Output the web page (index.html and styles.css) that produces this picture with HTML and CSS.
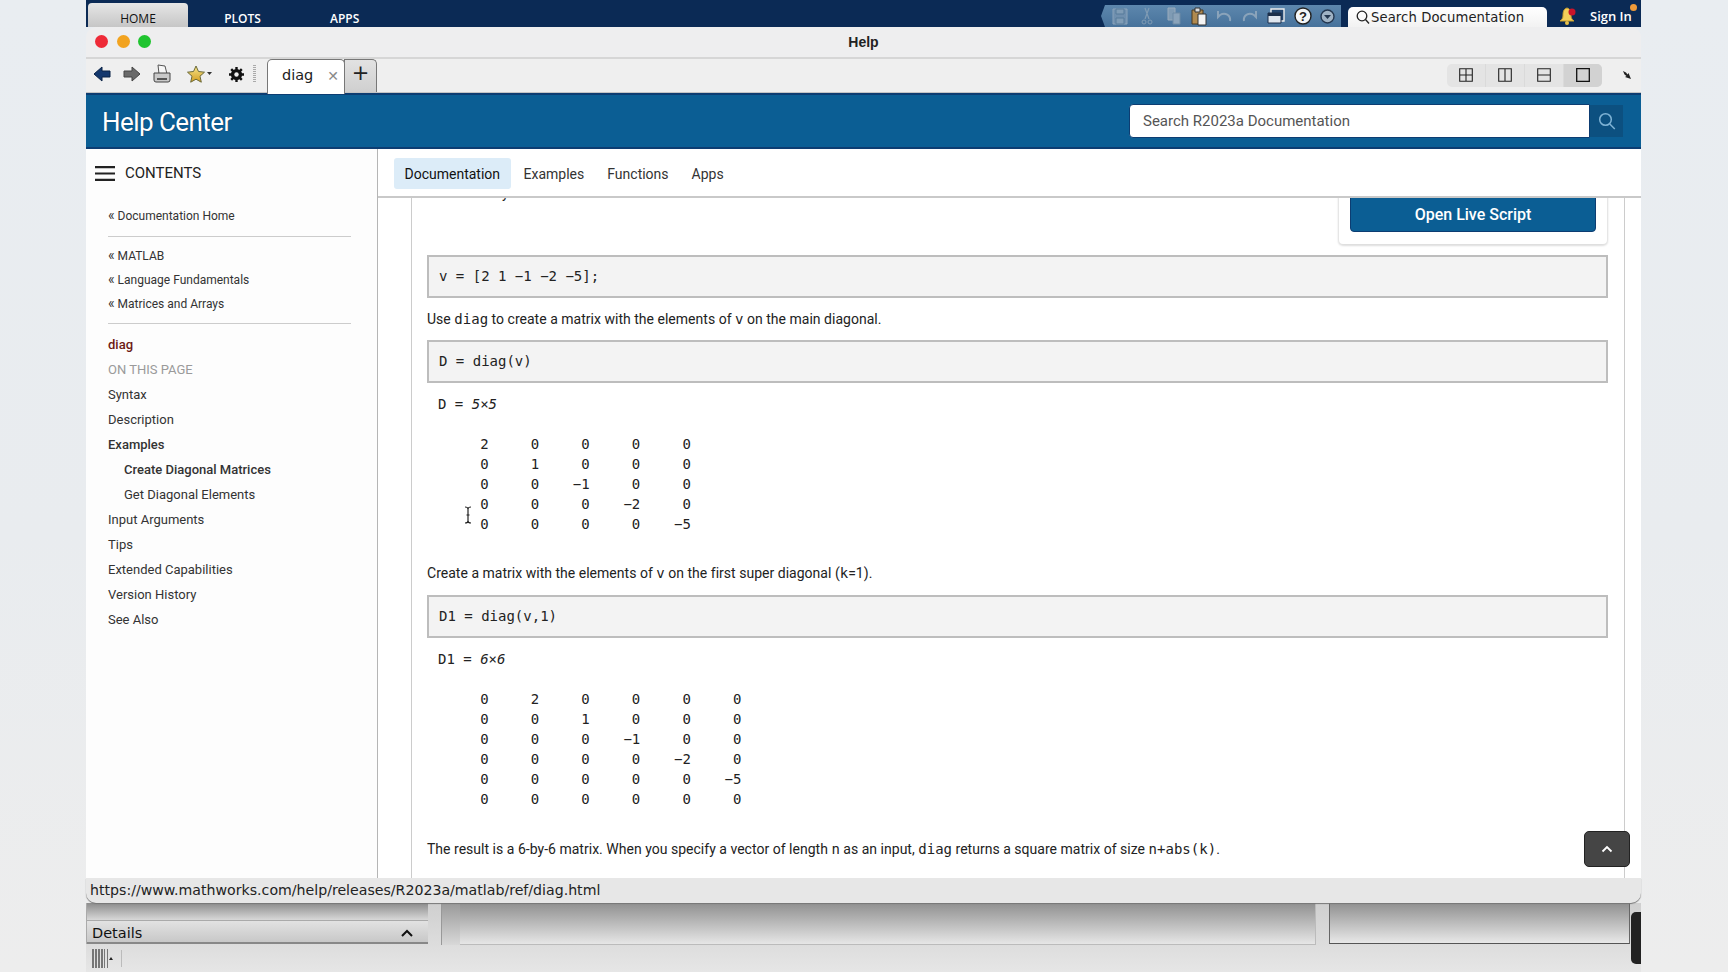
FILE: index.html
```html
<!DOCTYPE html>
<html lang="en">
<head>
<meta charset="utf-8">
<title>Help</title>
<link rel="stylesheet" href="styles.css">
</head>
<body>
<div class="screen">
  <div class="matlab-top">
    <div class="rib-tab rib-active">HOME</div>
    <div class="rib-tab rib-plots">PLOTS</div>
    <div class="rib-tab rib-apps">APPS</div>
    <div class="quick">
      <svg class="qi" width="18" height="20" viewBox="0 0 18 20"><path d="M2 3h14v15H2z" fill="#6f8fae" stroke="#8aa3ba"/><path d="M5 3h8v5H5zM5 12h8v6H5z" fill="#7f9cb6" stroke="#577a9a"/></svg>
      <svg class="qi qi-cut" width="14" height="20" viewBox="0 0 14 20"><path d="M9 2L5 13M5 2l4 11" stroke="#7f9bb4" stroke-width="1.2" fill="none"/><circle cx="4" cy="16" r="2" fill="none" stroke="#7f9bb4"/><circle cx="10" cy="16" r="2" fill="none" stroke="#7f9bb4"/></svg>
      <svg class="qi qi-copy" width="16" height="20" viewBox="0 0 16 20"><path d="M2 2h7v12H2z" fill="#7f9bb4" stroke="#9ab"/><path d="M7 7h7v11H7z" fill="#8aa3ba" stroke="#6d8aa5"/></svg>
      <svg class="qi qi-paste" width="17" height="20" viewBox="0 0 17 20"><path d="M1 4h11v14H1z" fill="#b08a50" stroke="#4a3a20"/><path d="M4 2h5v4H4z" fill="#ddd" stroke="#333"/><path d="M7 8h8v11H7z" fill="#f4f4f4" stroke="#333"/></svg>
      <svg class="qi qi-undo" width="18" height="20" viewBox="0 0 18 20"><path d="M15 15c1-6-5-9-10-6L3 11V5" fill="none" stroke="#8aa3ba" stroke-width="2"/></svg>
      <svg class="qi qi-redo" width="18" height="20" viewBox="0 0 18 20"><path d="M3 15C2 9 8 6 13 9l2 2V5" fill="none" stroke="#8aa3ba" stroke-width="2"/></svg>
      <svg class="qi qi-win" width="18" height="20" viewBox="0 0 18 20"><path d="M4 3h13v12H4z" fill="#23466f" stroke="#eee" stroke-width="1.4"/><path d="M1 7h13v10H1z" fill="#dfe6ee" stroke="#1c2f4a"/><path d="M1 7h13v3H1z" fill="#1c2f4a"/></svg>
      <svg class="qi qi-help" width="18" height="18" viewBox="0 0 18 18"><circle cx="9" cy="9" r="8" fill="#f4f6f8" stroke="#222" stroke-width="1.4"/><text x="9" y="13.5" class="qmark">?</text></svg>
      <svg class="qi qi-more" width="15" height="15" viewBox="0 0 15 15"><circle cx="7.5" cy="7.5" r="6.5" fill="#9fb2c4" stroke="#23364f" stroke-width="1.4"/><path d="M4 6h7l-3.500 4z" fill="#23364f"/></svg>
    </div>
    <div class="doc-search">
      <svg width="14" height="15" viewBox="0 0 14 15"><circle cx="6" cy="6" r="4.800" fill="none" stroke="#222" stroke-width="1.300"/><path d="M9.500 9.500l3.500 4" stroke="#222" stroke-width="1.300"/></svg>
      <span>Search Documentation</span>
    </div>
    <svg class="bell" width="18" height="20" viewBox="0 0 18 20"><path d="M8 2c-4 1-4 5-4 8s-2 4-3 5h14c-1-1-3-2-3-5s0-7-4-8z" fill="#f4cf5a" stroke="#c89d2b"/><circle cx="8" cy="17" r="2" fill="#e7c04a"/><circle cx="13" cy="6" r="3.500" fill="#c9142a"/></svg>
    <span class="sign-in">Sign In</span>
    <span class="notify"></span>
  </div>

  <main class="window">
    <div class="titlebar">
      <div class="lights"><span class="light l-red"></span><span class="light l-amber"></span><span class="light l-green"></span></div>
      <h1 class="win-title">Help</h1>
    </div>

    <div class="toolbar">
      <svg class="ti ti-back" width="18" height="16" viewBox="0 0 18 16"><path d="M1 8l8-7v4h8v6H9v4z" fill="#14386e" stroke="#0b2347"/></svg>
      <svg class="ti ti-fwd" width="18" height="16" viewBox="0 0 18 16"><path d="M17 8L9 1v4H1v6h8v4z" fill="#6a6a6a" stroke="#444"/></svg>
      <svg class="ti ti-print" width="18" height="20" viewBox="0 0 18 20"><path d="M5 1l7 1 2 8H6z" fill="#f6f6f6" stroke="#555"/><path d="M1 9h16v7a2 2 0 0 1-2 2H3a2 2 0 0 1-2-2z" fill="#c9c9c9" stroke="#444"/><path d="M4 14h10v2H4z" fill="#555"/></svg>
      <svg class="ti ti-star" width="25" height="18" viewBox="0 0 25 18"><defs><linearGradient id="st" x1="0" y1="0" x2="0" y2="1"><stop offset="0" stop-color="#f7e58a"/><stop offset="1" stop-color="#d29e22"/></linearGradient></defs><path d="M9 1l2.500 5.500 6 .7-4.500 4 1.300 6L9 14.200 3.700 17.200 5 11.200.5 7.200l6-.7z" fill="url(#st)" stroke="#6b6a3a"/><path d="M20 7h5l-2.500 3z" fill="#333"/></svg>
      <svg class="ti ti-gear" width="15" height="15" viewBox="0 0 15 15"><circle cx="7.500" cy="7.500" r="4.200" fill="none" stroke="#111" stroke-width="2.800"/><path d="M7.500 0v15M0 7.500h15M2.200 2.200l10.600 10.600M12.800 2.200L2.200 12.800" stroke="#111" stroke-width="2.400"/><circle cx="7.500" cy="7.500" r="2.200" fill="#eee"/></svg>
      <span class="grip"></span>
      <div class="tab-diag"><span class="tab-name">diag</span><span class="tab-x">✕</span></div>
      <div class="tab-plus">+</div>
      <div class="views">
        <span class="view"><svg width="14" height="14" viewBox="0 0 14 14"><path d="M.7.7h12.600v12.600H.7zM7 .7v12.600M.7 7h12.600" fill="none" stroke="#222" stroke-width="1.100"/></svg></span>
        <span class="view"><svg width="14" height="14" viewBox="0 0 14 14"><path d="M.7.7h12.600v12.600H.7zM7 .7v12.600" fill="none" stroke="#222" stroke-width="1.100"/></svg></span>
        <span class="view"><svg width="14" height="14" viewBox="0 0 14 14"><path d="M.7.7h12.600v12.600H.7zM.7 7h12.600" fill="none" stroke="#222" stroke-width="1.100"/></svg></span>
        <span class="view view-on"><svg width="14" height="14" viewBox="0 0 14 14"><path d="M.7.7h12.600v12.600H.7z" fill="none" stroke="#111" stroke-width="1.300"/></svg></span>
      </div>
      <svg class="undock" width="8" height="8" viewBox="0 0 8 8"><path d="M0 0l3 1.500 1.500 2 1-1.500L8 8 2 6l1.500-1L1.500 3.500z" fill="#222"/></svg>
    </div>

    <header class="help-head">
      <div class="help-title">Help Center</div>
      <div class="help-search">
        <div class="help-input">Search R2023a Documentation</div>
        <div class="help-btn"><svg width="18" height="18" viewBox="0 0 18 18"><circle cx="7.500" cy="7.500" r="5.800" fill="none" stroke="#7fb3d5" stroke-width="1.500"/><path d="M11.800 12l5 5" stroke="#7fb3d5" stroke-width="1.500"/></svg></div>
      </div>
    </header>

    <div class="body-row">
      <nav class="sidebar">
        <div class="contents-head">
          <svg width="20" height="15" viewBox="0 0 20 15"><path d="M0 1.200h20M0 7.500h20M0 13.800h20" stroke="#222" stroke-width="2.200"/></svg>
          <span>CONTENTS</span>
        </div>
        <a class="nav-link nav-home"><span class="nav-q">«</span> Documentation Home</a>
        <div class="nav-rule"></div>
        <a class="nav-link nav-small"><span class="nav-q">«</span> MATLAB</a>
        <a class="nav-link nav-small"><span class="nav-q">«</span> Language Fundamentals</a>
        <a class="nav-link nav-small"><span class="nav-q">«</span> Matrices and Arrays</a>
        <div class="nav-rule nav-rule-2"></div>
        <a class="nav-link nav-current">diag</a>
        <div class="nav-link nav-label">ON THIS PAGE</div>
        <a class="nav-link">Syntax</a>
        <a class="nav-link">Description</a>
        <a class="nav-link nav-strong">Examples</a>
        <a class="nav-link nav-sub nav-strong">Create Diagonal Matrices</a>
        <a class="nav-link nav-sub">Get Diagonal Elements</a>
        <a class="nav-link">Input Arguments</a>
        <a class="nav-link">Tips</a>
        <a class="nav-link">Extended Capabilities</a>
        <a class="nav-link">Version History</a>
        <a class="nav-link">See Also</a>
      </nav>

      <section class="doc">
        <div class="doc-tabs">
          <span class="doc-tab doc-tab-on">Documentation</span>
          <span class="doc-tab">Examples</span>
          <span class="doc-tab">Functions</span>
          <span class="doc-tab">Apps</span>
        </div>
        <div class="doc-scroll">
          <article class="article">
            <div class="live-card"><div class="live-btn">Open Live Script</div></div>
            <p class="para para-first">Create a 1-by-5 vector.</p>
            <div class="code">v = [2 1 −1 −2 −5];</div>
            <p class="para para-gap">Use <code>diag</code> to create a matrix with the elements of <code>v</code> on the main diagonal.</p>
            <div class="code">D = diag(v)</div>
<pre class="out out-a">D = <i>5×5</i>

     2     0     0     0     0
     0     1     0     0     0
     0     0    −1     0     0
     0     0     0    −2     0
     0     0     0     0    −5</pre>
            <p class="para para-after">Create a matrix with the elements of <code>v</code> on the first super diagonal (<code>k</code>=1).</p>
            <div class="code">D1 = diag(v,1)</div>
<pre class="out out-b">D1 = <i>6×6</i>

     0     2     0     0     0     0
     0     0     1     0     0     0
     0     0     0    −1     0     0
     0     0     0     0    −2     0
     0     0     0     0     0    −5
     0     0     0     0     0     0</pre>
            <p class="para para-after">The result is a 6-by-6 matrix. When you specify a vector of length <code>n</code> as an input, <code>diag</code> returns a square matrix of size <code>n+abs(k)</code>.</p>
          </article>
          <div class="to-top"><svg width="12" height="8" viewBox="0 0 12 8"><path d="M1.500 6.500L6 2l4.500 4.500" fill="none" stroke="#fff" stroke-width="1.800"/></svg></div>
          <svg class="ibeam" width="8" height="18" viewBox="0 0 8 18"><path d="M1 1c2 0 3 1 3 2v12c0 1-1 2-3 2M7 1c-2 0-3 1-3 2v12c0 1 1 2 3 2M2.500 9h3" fill="none" stroke="#222" stroke-width="1.200"/></svg>
        </div>
      </section>
    </div>

    <div class="statusbar">https://www.mathworks.com/help/releases/R2023a/matlab/ref/diag.html</div>
  </main>

  <div class="desk">
    <div class="desk-panels">
      <div class="details">
        <div class="details-top"></div>
        <div class="details-bar"><span>Details</span><svg width="12" height="8" viewBox="0 0 12 8"><path d="M1 7l5-5 5 5" fill="none" stroke="#111" stroke-width="2"/></svg></div>
      </div>
      <div class="gutter"></div>
      <div class="mid"></div>
      <div class="right-panel"></div>
      <div class="dark-tab"></div>
    </div>
    <div class="desk-foot">
      <span class="bars"></span><span class="caret"></span><span class="foot-rule"></span>
    </div>
  </div>
</div>
</body>
</html>
```
FILE: styles.css
```css
* { box-sizing: border-box; }
html, body { margin: 0; padding: 0; height: 100%; overflow: hidden; }
body { background: linear-gradient(180deg, #e9edf1 0%, #e9ecef 55%, #ededed 100%); font-family: Roboto, "Liberation Sans", sans-serif; color: #222; }
.screen { width: 1555px; margin-left: 86px; height: 972px; display: flex; flex-direction: column; position: relative; }

/* MATLAB ribbon strip */
.matlab-top { height: 27px; flex: none; background: #0b2a55; display: flex; align-items: flex-end; font-family: "Open Sans", "DejaVu Sans", sans-serif; color: #fff; position: relative; }
.rib-tab { font-size: 12px; line-height: 31px; height: 24px; text-align: center; }
.rib-active { width: 100px; margin-left: 2px; background: linear-gradient(#e6e6e6, #c6c6c6); border-radius: 4px 4px 0 0; color: #111; }
.rib-plots { margin-left: 36px; width: 37px; font-weight: 600; }
.rib-apps { margin-left: 69px; width: 28px; font-weight: 600; }
.quick { margin-left: 743px; width: 240px; height: 22px; display: flex; align-items: center; background: linear-gradient(#5d87ad, #47729b); clip-path: polygon(0 50%, 4px 0, 100% 0, 100% 100%, 4px 100%); padding-left: 10px; }
.qi { flex: none; }
.qi-cut { margin-left: 11px; }
.qi-copy { margin-left: 12px; }
.qi-paste { margin-left: 9px; }
.qi-undo { margin-left: 7px; }
.qi-redo { margin-left: 8px; }
.qi-win { margin-left: 8px; }
.qi-help { margin-left: 9px; }
.qi-more { margin-left: 8px; }
.qmark { font: 700 13px "Liberation Sans", sans-serif; fill: #222; text-anchor: middle; }
.doc-search { margin-left: 7px; width: 199px; height: 20px; background: linear-gradient(#fff, #f2f2f2); border-radius: 5px 5px 0 0; display: flex; align-items: center; gap: 1px; padding: 1px 0 0 8px; color: #222; font: 13.200px "DejaVu Sans", sans-serif; letter-spacing: .1px; }
.bell { margin: 0 0 1px 12px; flex: none; }
.sign-in { margin: 0 0 1px 13px; font-size: 13px; line-height: 20px; font-weight: 600; white-space: nowrap; }
.notify { position: absolute; right: 4px; top: 4px; width: 7px; height: 7px; border-radius: 50%; background: #ee9a3a; }

/* Help window */
.window { flex: none; height: 876px; display: flex; flex-direction: column; position: relative; z-index: 1; }
.titlebar { height: 32px; flex: none; background: #eeeeef; border-radius: 10px 10px 0 0; border-bottom: 2px solid #d6d6d6; margin-top: 0; display: flex; align-items: center; position: relative; }
.lights { display: flex; gap: 8.500px; padding-left: 9px; position: relative; top: -1px; }
.light { width: 13px; height: 13px; border-radius: 50%; }
.l-red { background: #ee2a37; }
.l-amber { background: #f2a31f; }
.l-green { background: #1fc42f; }
.win-title { position: absolute; left: 0; right: 0; top: 5px; margin: 0; text-align: center; font: 700 14px/20px "Liberation Sans", sans-serif; color: #222; }

.toolbar { height: 34px; flex: none; background: #efefef; display: flex; align-items: center; position: relative; border-bottom: 1px solid #c4c4c4; padding-bottom: 3px; }
.ti { flex: none; }
.ti-back { margin-left: 7px; }
.ti-fwd { margin-left: 12px; }
.ti-print { margin-left: 12px; }
.ti-star { margin-left: 16px; }
.ti-gear { margin-left: 17px; }
.grip { width: 3px; height: 18px; margin-left: 9px; background: repeating-linear-gradient(#aaa 0 1px, transparent 1px 2px); flex: none; }
.tab-diag { margin-left: 11px; width: 78px; height: 35px; align-self: flex-start; background: #fff; border: 1px solid #777; border-bottom: none; border-radius: 5px 5px 0 0; display: flex; align-items: center; padding-left: 14px; position: relative; z-index: 1; }
.tab-name { font: 14.500px "DejaVu Sans", sans-serif; color: #222; margin-top: -5px; }
.tab-x { margin-left: 14px; font: 700 14px "DejaVu Sans", sans-serif; color: #8a8a8a; margin-top: -2px; }
.tab-plus { margin-left: -1px; width: 33px; height: 33px; align-self: flex-start; background: linear-gradient(#e2e2e2, #cfcfcf); border: 1px solid #777; border-bottom: none; border-radius: 0 5px 0 0; text-align: center; font: 21px/27px "DejaVu Sans", sans-serif; color: #222; }
.views { margin-left: auto; width: 155px; height: 23px; background: #e4e4e4; border-radius: 5px; display: flex; margin-right: 39px; position: relative; top: 1px; }
.view { flex: 1; display: flex; align-items: center; justify-content: center; border-right: 1px solid #dadada; }
.view:last-child { border-right: none; }
.view-on { background: #d2d2d2; border-radius: 0 5px 5px 0; }
.undock { position: absolute; right: 10px; top: 12px; }

.help-head { height: 56px; flex: none; background: #0b5e94; border-top: 2px solid #0d3d72; border-bottom: 2px solid #0d3d72; display: flex; align-items: center; justify-content: space-between; padding: 0 18px 0 16px; }
.help-title { font-size: 26px; letter-spacing: -.55px; color: #fff; text-shadow: 0 0 1px #0a2f55; padding-top: 1px; }
.help-search { display: flex; align-items: center; }
.help-input { width: 461px; height: 34px; background: #fff; border-radius: 4px 0 0 4px; border: 1px solid #0d3d72; padding-left: 13px; font-size: 15px; line-height: 32px; color: #555; }
.help-btn { width: 33px; height: 32px; background: #0c5080; display: flex; align-items: center; justify-content: center; }

.body-row { flex: 1; min-height: 0; display: flex; background: #fff; }
.sidebar { width: 292px; flex: none; background: #fdfdfd; border-right: 1px solid #b5b5b5; padding: 14px 0 0 22px; display: flex; flex-direction: column; font-size: 13px; color: #333; }
.contents-head { margin-left: -13px; display: flex; align-items: center; gap: 10px; height: 20px; font-size: 15px; color: #222; margin-bottom: 25px; }
.nav-link { display: block; height: 25px; line-height: 25px; white-space: nowrap; }
.nav-home { height: 16px; line-height: 16px; font-size: 12px; }
.nav-small { height: 24px; line-height: 24px; font-size: 12px; }
.nav-q { font-size: 14px; line-height: 1; }
.nav-rule { width: 243px; height: 1px; background: #ccc; flex: none; margin: 12px 0 7px; }
.nav-rule-2 { margin: 7px 0 8px; }
.nav-current { color: #6d1a14; font-weight: 500; }
.nav-label { color: #9a9a9a; }
.nav-strong { font-weight: 500; }
.nav-sub { padding-left: 16px; }

.doc { flex: 1; min-width: 0; display: flex; flex-direction: column; background: #fff; }
.doc-tabs { height: 49px; flex: none; border-bottom: 2px solid #c9c9c9; display: flex; align-items: flex-start; padding: 9px 0 0 16px; font-size: 14px; gap: 3px; position: relative; z-index: 2; background: #fff; }
.doc-tab { height: 31px; line-height: 32px; padding: 0 10px; color: #333; }
.doc-tab-on { background: #dcecf8; border-radius: 3px; color: #111; padding: 0 10.500px; }
.doc-scroll { flex: 1; min-height: 0; overflow: hidden; position: relative; }
.article { margin: -15px 16px 0 33px; border-left: 1px solid #ccc; border-right: 1px solid #ccc; padding: 0 16px 40px 15px; font-size: 14px; min-height: 800px; }
.live-card { float: right; width: 268px; height: 61px; margin: 0 1px 11px 0; background: #fff; border-radius: 0 0 4px 4px; box-shadow: 0 1px 2px 1px #dedede; padding: 0 11px; }
.live-btn { height: 49px; padding-top: 14px; background: #0b5e94; border-radius: 4px; border: 1px solid #0d3d72; color: #fff; text-align: center; font-size: 16px; line-height: 34px; font-weight: 500; }
.para { margin: 0; line-height: 20px; color: #222; letter-spacing: .02px; }
.para code { font: 14px "DejaVu Sans Mono", monospace; }
.para-first { height: 20px; }
.para-gap { margin: 11px 0; }
.para-after { margin: 30px 0 12px; }
.code { clear: both; height: 43px; background: #f3f3f3; border: 2px solid #bdbdbd; padding-left: 10px; font: 14px/39px "DejaVu Sans Mono", monospace; color: #222; white-space: pre; }
.out { margin: 11px 0 0 11px; font: 14px/20px "DejaVu Sans Mono", monospace; color: #222; }
.out-a, .out-b { margin-bottom: -1px; }
.out-b { margin-bottom: 0; }
.to-top { position: absolute; left: 1206px; top: 633px; width: 46px; height: 36px; background: #454545; border: 1px solid #222; border-radius: 5px; display: flex; align-items: center; justify-content: center; }
.ibeam { position: absolute; left: 86px; top: 308px; }

.statusbar { height: 25px; flex: none; background: #e7e7e7; border-radius: 0 0 10px 10px; box-shadow: 0 1px 1px #777; padding-left: 4px; font: 14.150px/24px "DejaVu Sans", sans-serif; color: #222; position: relative; }

/* desktop behind */
.desk { flex: 1; min-height: 0; display: flex; flex-direction: column; background: linear-gradient(#cfcfcf, #e6e6e6); }
.desk-panels { height: 42px; flex: none; display: flex; position: relative; }
.details { width: 342px; flex: none; display: flex; flex-direction: column; border-left: 1px solid #aaa; margin-bottom: 1px; }
.details-top { height: 18px; flex: none; background: linear-gradient(#8c8c8c, #d8d8d8); border-bottom: 1px solid #aaa; }
.details-bar { flex: 1; background: linear-gradient(#e2e2e2, #c8c8c8); border-bottom: 2px solid #888; display: flex; align-items: center; justify-content: space-between; padding: 3px 15px 0 5px; font: 14.500px "DejaVu Sans", sans-serif; color: #111; }
.gutter { width: 19px; flex: none; margin-left: 13px; background: linear-gradient(#999, #d8d8d8); border-left: 1px solid #999; }
.mid { width: 856px; flex: none; background: linear-gradient(#909090, #e6e6e6); border-bottom: 1px solid #bbb; border-right: 1px solid #bbb; }
.right-panel { width: 301px; flex: none; margin-left: 13px; margin-bottom: 1px; background: linear-gradient(#909090, #e8e8e8); border: 1px solid #666; border-top: none; border-bottom: 1px solid #555; }
.dark-tab { position: absolute; right: 0; top: 9px; width: 10px; height: 52px; background: #222; border-radius: 5px 0 0 5px; }
.desk-foot { flex: 1; display: flex; align-items: center; padding-left: 6px; }
.bars { width: 16px; height: 19px; background: repeating-linear-gradient(90deg, #777 0 1.500px, transparent 1.500px 3px); }
.caret { width: 0; height: 0; border: 2.500px solid transparent; border-bottom: 3px solid #222; border-top: none; margin-left: 1px; }
.foot-rule { width: 1px; height: 17px; background: #bbb; margin-left: 8px; }
```
